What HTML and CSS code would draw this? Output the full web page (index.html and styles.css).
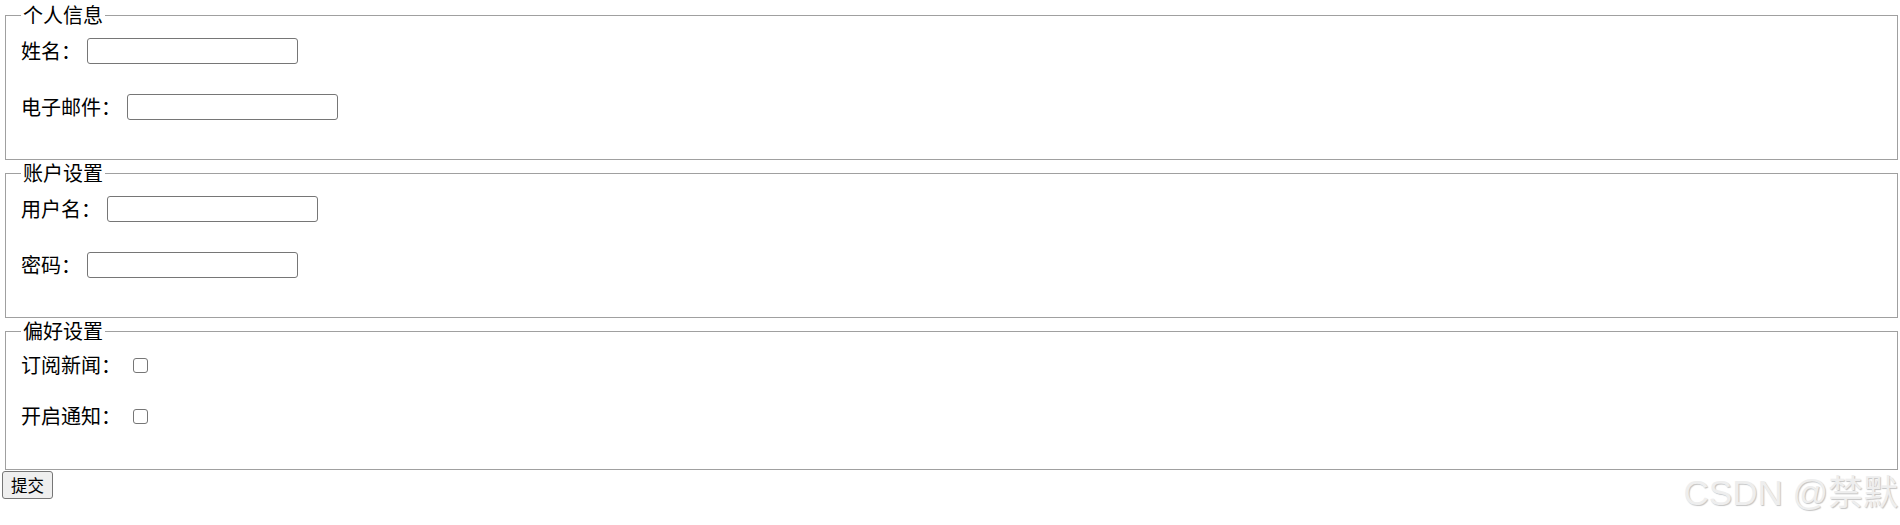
FILE: index.html
```html
<!DOCTYPE html>
<html lang="zh-CN">
<head>
<meta charset="utf-8">
<title>表单</title>
<link rel="stylesheet" href="styles.css">
</head>
<body>
<form class="form">
  <fieldset class="group">
    <legend class="group-title">个人信息</legend>
    <div class="row"><label class="label" for="name">姓名：</label><input class="text" id="name" type="text"></div>
    <div class="row"><label class="label" for="email">电子邮件：</label><input class="text" id="email" type="email"></div>
  </fieldset>
  <fieldset class="group">
    <legend class="group-title">账户设置</legend>
    <div class="row"><label class="label" for="user">用户名：</label><input class="text" id="user" type="text"></div>
    <div class="row"><label class="label" for="pwd">密码：</label><input class="text" id="pwd" type="password"></div>
  </fieldset>
  <fieldset class="group group-checks">
    <legend class="group-title">偏好设置</legend>
    <div class="row row-check"><label class="label" for="news">订阅新闻：</label><input class="check" id="news" type="checkbox"></div>
    <div class="row row-check"><label class="label" for="notify">开启通知：</label><input class="check" id="notify" type="checkbox"></div>
  </fieldset>
  <button class="submit" type="submit">提交</button>
</form>
<div class="watermark">CSDN @禁默</div>
</body>
</html>
```
FILE: styles.css
```css
html, body {
  background: #ffffff;
}
body {
  margin: 2px 0 0 2px;
  font-family: "Noto Sans CJK SC", "Microsoft YaHei", sans-serif;
  color: #000;
  position: relative;
  height: 521px;
  overflow: hidden;
}
.form {
  margin: 0;
}
.group {
  margin: 0 2px 0 3px;
  border: 1px solid #a0a0a0;
  padding: 9px 15px 10px 15px;
  min-width: 0;
}
.group-title {
  font-size: 20px;
  line-height: 26px;
  padding: 0 2px;
}
.row {
  display: flex;
  align-items: center;
  height: 28px;
  margin-bottom: 28px;
  font-size: 20px;
}
.label {
  line-height: 26px;
  white-space: nowrap;
}
.text {
  box-sizing: border-box;
  width: 211px;
  height: 26px;
  margin: 0 0 0 6px;
  padding: 1px 3px;
  border: 1px solid #767676;
  border-radius: 3px;
  background: #fff;
  font-size: 16px;
}
.group-checks {
  padding-bottom: 14px;
}
.row-check {
  height: 24px;
  margin-bottom: 27px;
}
.check {
  appearance: none;
  -webkit-appearance: none;
  box-sizing: border-box;
  width: 15px;
  height: 15px;
  margin: 0 0 0 12px;
  border: 1px solid #767676;
  border-radius: 3px;
  background: #fff;
}
.submit {
  display: block;
  box-sizing: border-box;
  width: 51px;
  height: 28px;
  margin: 1px 0 0 0;
  padding: 0;
  border: 1px solid #767676;
  border-radius: 3px;
  background: #efefef;
  font-family: "Noto Sans CJK SC", "Microsoft YaHei", sans-serif;
  font-size: 16.5px;
  line-height: 26px;
  color: #000;
}
.watermark {
  position: absolute;
  right: 2px;
  top: 471px;
  font-family: "Liberation Sans", Arial, "Noto Sans CJK SC", sans-serif;
  font-size: 35px;
  line-height: 40px;
  color: #eeeeee;
  text-shadow: 1px 1px 1px #c4c4c4;
  white-space: nowrap;
}
```
